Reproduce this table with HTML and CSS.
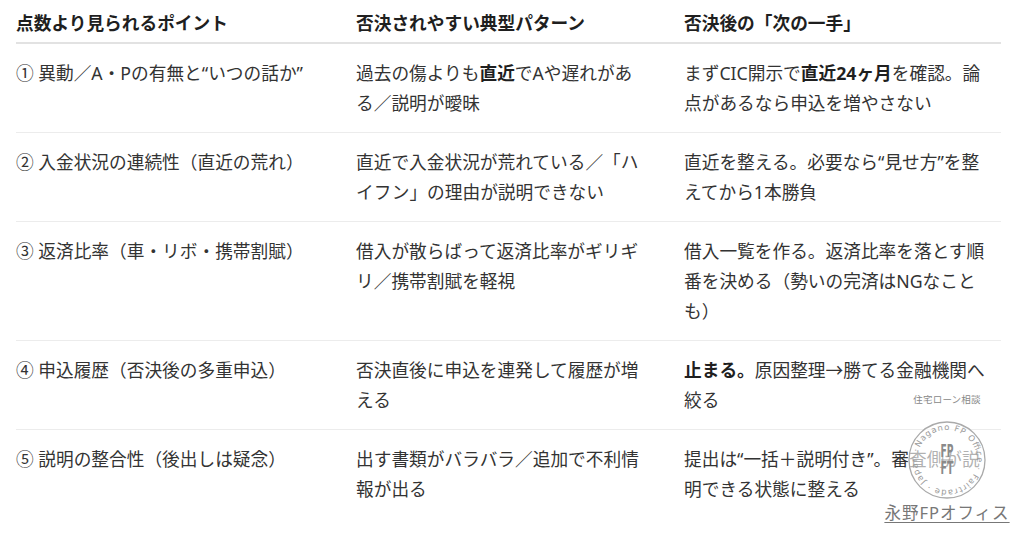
FILE: index.html
```html
<!DOCTYPE html>
<html lang="ja">
<head>
<meta charset="utf-8">
<link rel="stylesheet" href="styles.css">
</head>
<body>
<div class="page">
  <div class="table">
    <div class="row head">
      <div class="cell c1">点数より見られるポイント</div>
      <div class="cell c2">否決されやすい典型パターン</div>
      <div class="cell c3">否決後の「次の一手」</div>
    </div>
    <div class="row">
      <div class="cell c1">① 異動／A・Pの有無と“いつの話か”</div>
      <div class="cell c2">過去の傷よりも<b>直近</b>でAや遅れがある／説明が曖昧</div>
      <div class="cell c3">まずCIC開示で<b>直近24ヶ月</b>を確認。論点があるなら申込を増やさない</div>
    </div>
    <div class="row">
      <div class="cell c1">② 入金状況の連続性（直近の荒れ）</div>
      <div class="cell c2">直近で入金状況が荒れている／「ハイフン」の理由が説明できない</div>
      <div class="cell c3">直近を整える。必要なら“見せ方”を整えてから1本勝負</div>
    </div>
    <div class="row">
      <div class="cell c1">③ 返済比率（車・リボ・携帯割賦）</div>
      <div class="cell c2">借入が散らばって返済比率がギリギリ／携帯割賦を軽視</div>
      <div class="cell c3">借入一覧を作る。返済比率を落とす順番を決める（勢いの完済はNGなことも）</div>
    </div>
    <div class="row">
      <div class="cell c1">④ 申込履歴（否決後の多重申込）</div>
      <div class="cell c2">否決直後に申込を連発して履歴が増える</div>
      <div class="cell c3"><b>止まる。</b>原因整理→勝てる金融機関へ絞る</div>
    </div>
    <div class="row last">
      <div class="cell c1">⑤ 説明の整合性（後出しは疑念）</div>
      <div class="cell c2">出す書類がバラバラ／追加で不利情報が出る</div>
      <div class="cell c3">提出は“一括＋説明付き”。審査側が説明できる状態に整える</div>
    </div>
  </div>

  <div class="stamp">
    <div class="stamp-caption">住宅ローン相談</div>
    <svg class="stamp-seal" viewBox="0 0 80 80" width="80" height="80">
      <defs>
        <path id="ring" d="M 10 40 A 30 30 0 1 1 70 40 A 30 30 0 1 1 10 40"/>
      </defs>
      <circle cx="40" cy="40" r="38" fill="rgba(255,255,255,0.62)" stroke="#aaaaaa" stroke-width="1.3"/>
      <g transform="rotate(24 40 40)">
        <text class="ring-text"><textPath href="#ring" textLength="186" lengthAdjust="spacing">Nagano FP Office · Fairtrade · Japan ·</textPath></text>
      </g>
      <text class="mono" x="40" y="37" text-anchor="middle" textLength="13" lengthAdjust="spacingAndGlyphs">FP</text>
      <line x1="34" y1="40" x2="46" y2="40" stroke="#9a9a9a" stroke-width="1"/>
      <text class="mono" x="40" y="54" text-anchor="middle" textLength="13" lengthAdjust="spacingAndGlyphs">FT</text>
    </svg>
    <div class="stamp-name">永野FPオフィス</div>
  </div>
</div>
</body>
</html>
```

FILE: styles.css
```css
html, body {
  margin: 0;
  padding: 0;
  background: #ffffff;
}

body {
  font-family: "Noto Sans", "Noto Sans CJK JP", sans-serif;
  color: #333333;
}

.page {
  position: relative;
  width: 1024px;
  height: 538px;
  overflow: hidden;
}

.table {
  margin-left: 16px;
  width: 985px;
}

.row {
  display: grid;
  grid-template-columns: 324px 328px 333px;
  border-bottom: 1px solid #ececec;
}

.row.last {
  border-bottom: none;
}

.cell {
  font-size: 17.7px;
  line-height: 30px;
  padding: 14px 16px 14px 16px;
}

.cell.c1 {
  padding-left: 0;
}

.cell.c2 {
  padding-right: 24px;
}

.cell.c3 {
  padding-right: 10px;
}

.cell b {
  font-weight: 700;
  color: #1f1f1f;
}

.row.head {
  border-bottom: 2px solid #e2e2e2;
}

.row.head .cell {
  padding-top: 8px;
  padding-bottom: 4px;
  line-height: 30px;
  font-weight: 700;
  color: #1f1f1f;
}

.stamp {
  position: absolute;
  left: 880px;
  top: 392px;
  width: 134px;
  display: flex;
  flex-direction: column;
  align-items: center;
}

.stamp-caption {
  font-size: 9.5px;
  line-height: 16px;
  color: #888888;
  letter-spacing: 0.2px;
}

.stamp-seal {
  display: block;
  margin-top: 12px;
}

.ring-text {
  font-family: "DejaVu Sans", sans-serif;
  font-size: 8.4px;
  fill: #9a9a9a;
}

.mono {
  font-family: "DejaVu Sans", sans-serif;
  font-weight: 700;
  font-size: 17px;
  fill: #8a8a8a;
}

.stamp-name {
  margin-top: 1px;
  font-size: 16.5px;
  line-height: 24px;
  color: #777777;
  text-decoration: underline;
  text-underline-offset: 3px;
  letter-spacing: 1px;
}
```
